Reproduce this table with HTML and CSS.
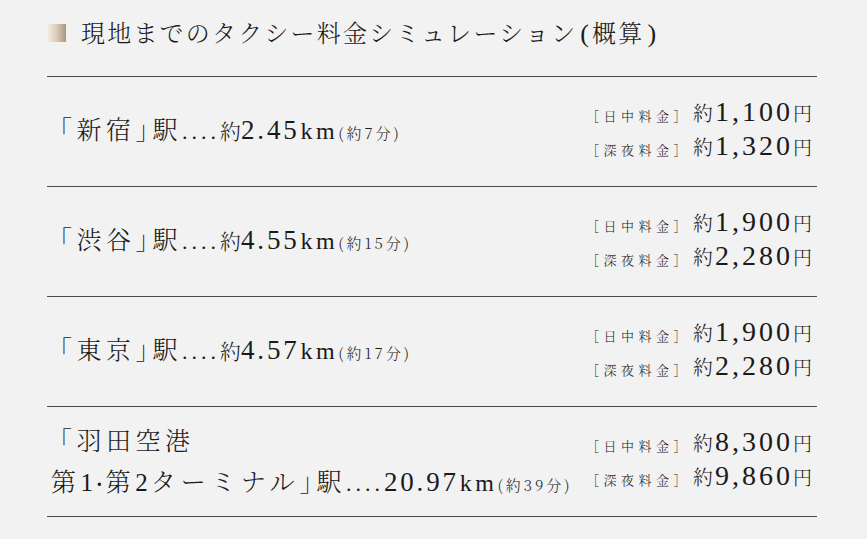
FILE: index.html
```html
<!DOCTYPE html>
<html lang="ja">
<head>
<meta charset="utf-8">
<title>タクシー料金シミュレーション</title>
<link rel="stylesheet" href="styles.css">
</head>
<body>
<main class="page">
  <h1 class="title"><span class="mark"></span><span class="title-text">現地までのタクシー料金シミュレーション<span class="paren">(</span>概算<span class="paren">)</span></span></h1>
  <ul class="list">
    <li class="row">
      <div class="dest"><span class="name">「新宿<span class="close">」</span>駅</span><span class="dots">....</span><span class="approx">約</span><span class="num">2.45</span><span class="unit">km</span><span class="time">(約7分)</span></div>
      <div class="fares">
        <div class="fare"><span class="label">［日中料金］</span><span class="approx">約</span><span class="price">1,100</span><span class="yen">円</span></div>
        <div class="fare"><span class="label">［深夜料金］</span><span class="approx">約</span><span class="price">1,320</span><span class="yen">円</span></div>
      </div>
    </li>
    <li class="row">
      <div class="dest"><span class="name">「渋谷<span class="close">」</span>駅</span><span class="dots">....</span><span class="approx">約</span><span class="num">4.55</span><span class="unit">km</span><span class="time">(約15分)</span></div>
      <div class="fares">
        <div class="fare"><span class="label">［日中料金］</span><span class="approx">約</span><span class="price">1,900</span><span class="yen">円</span></div>
        <div class="fare"><span class="label">［深夜料金］</span><span class="approx">約</span><span class="price">2,280</span><span class="yen">円</span></div>
      </div>
    </li>
    <li class="row">
      <div class="dest"><span class="name">「東京<span class="close">」</span>駅</span><span class="dots">....</span><span class="approx">約</span><span class="num">4.57</span><span class="unit">km</span><span class="time">(約17分)</span></div>
      <div class="fares">
        <div class="fare"><span class="label">［日中料金］</span><span class="approx">約</span><span class="price">1,900</span><span class="yen">円</span></div>
        <div class="fare"><span class="label">［深夜料金］</span><span class="approx">約</span><span class="price">2,280</span><span class="yen">円</span></div>
      </div>
    </li>
    <li class="row">
      <div class="dest dest-multi">
        <div class="line"><span class="name">「羽田空港</span></div>
        <div class="line line-indent"><span class="name">第<span class="latin">1</span><span class="mid">·</span>第<span class="latin">2</span><span class="kana">ターミナル</span><span class="close">」</span>駅</span><span class="dots">....</span><span class="num">20.97</span><span class="unit">km</span><span class="time">(約39分)</span></div>
      </div>
      <div class="fares">
        <div class="fare"><span class="label">［日中料金］</span><span class="approx">約</span><span class="price">8,300</span><span class="yen">円</span></div>
        <div class="fare"><span class="label">［深夜料金］</span><span class="approx">約</span><span class="price">9,860</span><span class="yen">円</span></div>
      </div>
    </li>
  </ul>
</main>
</body>
</html>
```
FILE: styles.css
```css
* { box-sizing: border-box; }
html, body {
  margin: 0;
  padding: 0;
  background: #f2f2f2;
}
body {
  color: #1a1a1a;
  font-family: "Noto Serif CJK JP", "Noto Sans CJK JP", sans-serif;
  font-weight: 300;
}
.page {
  width: 770px;
  margin-left: 47px;
  padding-top: 17px;
}
.title {
  margin: 0;
  height: 59px;
  display: flex;
  align-items: flex-start;
  font-size: 24px;
  font-weight: 300;
  letter-spacing: 2.2px;
  line-height: 30px;
}
.mark {
  width: 18px;
  height: 18px;
  margin: 7px 15px 0 1px;
  background: linear-gradient(to right, #f2eadf 0%, #dccdbb 45%, #ab957f 100%);
  flex: none;
}
.title-text {
  font-weight: 300;
}
.paren {
  font-family: "Liberation Serif", serif;
  font-weight: 400;
  font-size: 26px;
  letter-spacing: 0;
  margin: 0 3px;
}
.list {
  list-style: none;
  margin: 0;
  padding: 0;
  border-top: 1px solid #4a4a4a;
}
.row {
  height: 110px;
  border-bottom: 1px solid #4a4a4a;
  display: flex;
  align-items: center;
  justify-content: space-between;
  padding: 0 5px 0 0;
}
.dest {
  display: flex;
  align-items: baseline;
  white-space: nowrap;
  margin-top: -8px;
}
.dest-multi {
  flex-direction: column;
  align-items: flex-start;
  margin-top: -4px;
}
.dest-multi .line {
  display: flex;
  align-items: baseline;
  height: 41px;
  line-height: 41px;
}
.dest-multi .line-indent {
  padding-left: 4px;
}
.name {
  font-size: 25px;
  letter-spacing: 4.5px;
  font-weight: 300;
}
.close {
  font-feature-settings: "halt" 1;
}
.kana {
  letter-spacing: 5px;
}
.latin {
  font-family: "Liberation Serif", serif;
  font-size: 25px;
  font-weight: 400;
  letter-spacing: 3px;
}
.mid {
  font-family: "Liberation Serif", serif;
  font-weight: 700;
  font-size: 20px;
  letter-spacing: 3px;
}
.dots {
  font-family: "Liberation Serif", serif;
  font-size: 22px;
  letter-spacing: 4px;
  font-weight: 400;
}
.approx {
  font-size: 21px;
  font-weight: 300;
}
.num {
  font-family: "Liberation Serif", serif;
  font-size: 27px;
  letter-spacing: 2.8px;
  font-weight: 400;
}
.unit {
  font-family: "Liberation Serif", serif;
  font-size: 24px;
  letter-spacing: 3.5px;
  font-weight: 400;
  margin-left: 1px;
}
.time {
  font-size: 15px;
  letter-spacing: 3px;
  font-weight: 300;
}
.fares {
  display: flex;
  flex-direction: column;
  align-items: flex-end;
  margin-top: -6px;
}
.fare {
  display: flex;
  align-items: baseline;
  height: 34px;
  line-height: 34px;
  white-space: nowrap;
}
.label {
  font-size: 13px;
  letter-spacing: 4.5px;
  margin-right: 2px;
  font-weight: 300;
}
.fare .approx {
  font-size: 20px;
}
.price {
  font-family: "Liberation Serif", serif;
  font-size: 28px;
  letter-spacing: 3px;
  font-weight: 400;
  margin-left: 2px;
}
.yen {
  font-size: 19px;
  font-weight: 300;
}
```
